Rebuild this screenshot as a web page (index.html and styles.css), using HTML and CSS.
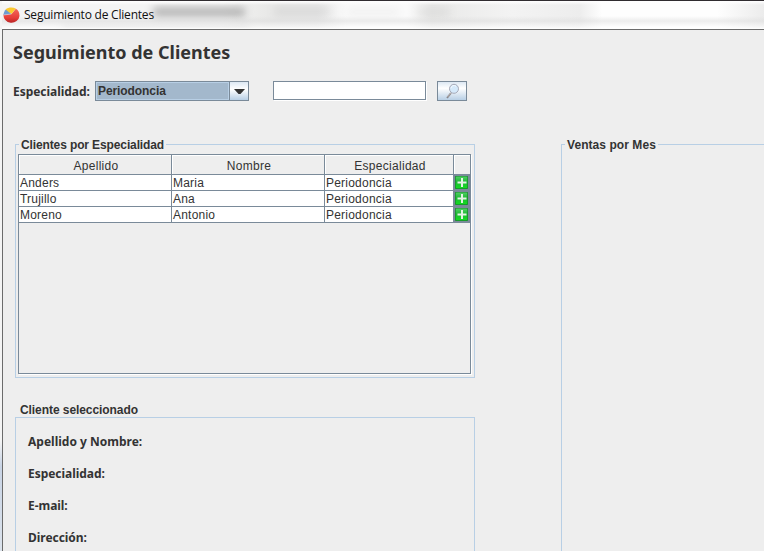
FILE: index.html
```html
<!DOCTYPE html>
<html lang="es">
<head>
<meta charset="utf-8">
<title>Seguimiento de Clientes</title>
<link rel="stylesheet" href="styles.css">
</head>
<body>
<div class="window">
  <header class="titlebar">
    <svg class="app-icon" width="17" height="17" viewBox="0 0 17 17">
      <defs><linearGradient id="red" x1="0" y1="0" x2="0" y2="1"><stop offset="0" stop-color="#f36a5c"/><stop offset=".65" stop-color="#e63c38"/><stop offset="1" stop-color="#b92525"/></linearGradient></defs>
      <path d="M.5 7.500a8 7.500 0 0 0 16 1.500C16.500 5 15 2.800 12.800 1.800L8.500 7Z" fill="url(#red)"/>
      <path d="M8.500 7 .5 8C.6 5.500 1.500 3.500 3.500 2Z" fill="#6f9bd0"/>
      <path d="M8.500 7 2.500 2.500C5.500.1 9.500 0 12.800 1.500Z" fill="#fbc92f"/>
      <path d="M8.500 7 .7 8" stroke="#fff" stroke-opacity=".6" stroke-width=".7"/>
    </svg>
    <span class="caption">Seguimiento de Clientes</span>
    <i class="haze haze-a"></i><i class="haze haze-b"></i><i class="haze haze-c"></i><i class="haze haze-d"></i><i class="haze haze-e"></i>
  </header>
  <main class="client">
    <h1 class="heading"><span>Seguimiento de Clientes</span></h1>
    <form class="filters">
      <label class="label filter-label">Especialidad:</label>
      <div class="combo"><span class="combo-value">Periodoncia</span><span class="combo-arrow"><svg width="11" height="6" viewBox="0 0 11 6"><path d="M0 0h11L6.500 5h-2z" fill="#333"/></svg></span></div>
      <input class="search" type="text" aria-label="Buscar">
      <button class="search-button" type="button" aria-label="Buscar">
        <svg width="15" height="16" viewBox="0 0 15 16"><path d="M2 15 6 10" stroke="#85868e" stroke-width="1.800"/><path d="M2.500 14 6 10" stroke="#d0bdb2" stroke-width=".7"/><circle cx="9" cy="5.800" r="4.500" fill="#d5e9fa" stroke="#a6a9b8" stroke-width="1"/><path d="M6 5.300a3 3 0 0 1 5-2" fill="none" stroke="#f5fbff"/></svg>
      </button>
    </form>
    <div class="columns">
      <div class="left">
        <section class="group clients">
          <h2 class="group-title">Clientes por Especialidad</h2>
          <div class="scroll">
            <div class="row head"><span>Apellido</span><span>Nombre</span><span>Especialidad</span><span></span></div>
            <div class="row"><span>Anders</span><span>Maria</span><span>Periodoncia</span><span class="add"><svg width="13" height="13" viewBox="0 0 13 13"><use href="#plus"/></svg></span></div>
            <div class="row"><span>Trujillo</span><span>Ana</span><span>Periodoncia</span><span class="add"><svg width="13" height="13" viewBox="0 0 13 13"><use href="#plus"/></svg></span></div>
            <div class="row"><span>Moreno</span><span>Antonio</span><span>Periodoncia</span><span class="add"><svg width="13" height="13" viewBox="0 0 13 13"><use href="#plus"/></svg></span></div>
          </div>
        </section>
        <h2 class="selected-title">Cliente seleccionado</h2>
        <section class="selected">
          <p class="label wide">Apellido y Nombre:</p>
          <p class="label">Especialidad:</p>
          <p class="label">E-mail:</p>
          <p class="label">Dirección:</p>
        </section>
      </div>
      <section class="group sales"><h2 class="group-title">Ventas por Mes</h2></section>
    </div>
  </main>
</div>
<svg class="defs" width="0" height="0"><defs>
  <linearGradient id="green" x1="0" y1="0" x2="0" y2="1"><stop offset="0" stop-color="#4fcf62"/><stop offset=".45" stop-color="#20b936"/><stop offset="1" stop-color="#12dc20"/></linearGradient>
  <g id="plus"><rect width="13" height="13" rx="1" fill="#15892a"/><rect x=".7" y=".5" width="11.600" height="11.700" rx="1" fill="url(#green)"/><path d="M7 2v9M2.500 6.500h9" stroke="#e4f2e5" stroke-width="2"/></g>
</defs></svg>
</body>
</html>
```
FILE: styles.css
```css
* { box-sizing: border-box; }
body { margin: 0; overflow: hidden; background: #f1f1f1; color: #333; font: 12px/14px "Liberation Sans", sans-serif; }
h1, h2, p { margin: 0; }
.defs { position: absolute; }
.window { width: 764px; height: 551px; overflow: hidden; border-top: 1px solid #302c30; padding-left: 2px; background: linear-gradient(#f4f4f4 440px, #c9d4e5 465px, #dce3ec); }
.titlebar { position: relative; height: 28px; display: flex; align-items: center; overflow: hidden; background: linear-gradient(90deg, #f4f4f4 0, #f4f4f4 220px, #e9e9e8 265px, #e9e9e9 315px, #fafafa 345px, #fafafa 405px, #e9e9e8 430px, #f3f3f3 510px, #ededed 578px, #fefefe 600px, #fefefe 715px, #ececec 762px); }
.titlebar::after { content: ""; position: absolute; inset: 0; background: linear-gradient(#fff 0, rgba(255,255,255,0) 4px, rgba(220,220,220,0) 15px, rgba(220,220,220,.5) 20px, rgba(255,255,255,.5) 26px, #fff 28px); }
.app-icon { position: relative; z-index: 2; margin: 0 4px 0 1px; }
.caption { position: relative; z-index: 2; color: #111; font: 12px/16px "Open Sans", sans-serif; letter-spacing: -.21px; margin-top: -1px; }
.haze { position: absolute; filter: blur(4px); background: #777; }
.haze-a { left: 151px; top: 6px; width: 92px; height: 10px; opacity: .5; }
.haze-b { left: 272px; top: 6px; width: 56px; height: 9px; opacity: .14; }
.haze-c { left: 345px; top: 8px; width: 52px; height: 6px; opacity: .08; }
.haze-d { left: 416px; top: 7px; width: 32px; height: 8px; opacity: .12; }
.haze-e { left: 60px; top: 27px; width: 188px; height: 4px; opacity: .5; }
.client { height: 522px; border-top: 1px solid #6b6b6b; border-left: 1px solid #6b6b6b; background: #eee; padding: 10px 0 0 10px; }
.heading { height: 24px; font: bold 18px/24px "Noto Sans", sans-serif; letter-spacing: 0; }
.label { font: bold 12px/16px "Noto Sans", sans-serif; letter-spacing: -.04px; }
.filters { display: flex; height: 21px; margin-top: 17px; }
.filter-label { width: 82px; padding-top: 3px; white-space: nowrap; letter-spacing: -.04px; }
.combo { display: flex; width: 154px; height: 20px; border: 1px solid #7a8a99; }
.combo-value { width: 133px; border: 1px solid #b8cfe5; background: #a3b8cc; font-weight: bold; line-height: 16px; padding-left: 1px; letter-spacing: -.08px; }
.combo-arrow { flex: 1; display: flex; align-items: center; justify-content: center; border-left: 1px solid #7a8a99; background: linear-gradient(#dde8f3, #fff 40%, #b8cfe5); padding-top: 1px; }
.search { width: 153px; height: 19px; margin-left: 24px; border: 1px solid #7a8a99; background: #fff; box-shadow: 1px 1px #fff; padding: 0; border-radius: 0; }
.search-button { display: flex; justify-content: center; align-items: center; width: 30px; height: 20px; margin-left: 11px; padding: 0; border: 1px solid #7a8a99; background: linear-gradient(#dde8f3, #fff 35%, #b8cfe5); }
.columns { display: flex; margin: 42px 0 0 2px; }
.left { flex: none; width: 460px; margin-right: 86px; }
.group { border: 1px solid #b8cfe5; }
.group-title { width: max-content; margin: -8px 0 0 3px; padding: 0 2px; background: #eee; font: bold 12px/16px "Liberation Sans", sans-serif; letter-spacing: -.12px; }
.clients { height: 234px; }
.scroll { width: 453px; height: 220px; margin: 1px 0 0 2px; border: 1px solid #7a8a99; box-shadow: 1px 1px #fff; }
.row { display: grid; grid-template-columns: 153px 153px 129px 16px; height: 16px; background: #fff; border-bottom: 1px solid #7a8a99; line-height: 16px; letter-spacing: .22px; }
.row > span { border-right: 1px solid #7a8a99; padding-left: 1px; height: 15px; }
.row > span:last-child { border-right: 0; }
.head { height: 20px; background: #eee; line-height: 22px; text-align: center; letter-spacing: .3px; }
.head > span { height: 19px; padding: 0 0 0 2px; box-shadow: inset 1px 1px #fff; }
.row > .add { display: flex; align-items: center; padding: 0 0 0 1px; background: #7a8a99; }
.selected-title { margin: 24px 0 0 5px; height: 15px; font: bold 12px/16px "Liberation Sans", sans-serif; letter-spacing: -.07px; }
.selected { height: 160px; border: 1px solid #b8cfe5; padding: 16px 0 0 12px; }
.selected .label { height: 16px; margin-bottom: 16px; }
.selected .wide { letter-spacing: 0; }
.sales { width: 240px; height: 440px; flex: none; }
.sales .group-title { letter-spacing: .06px; }
```
